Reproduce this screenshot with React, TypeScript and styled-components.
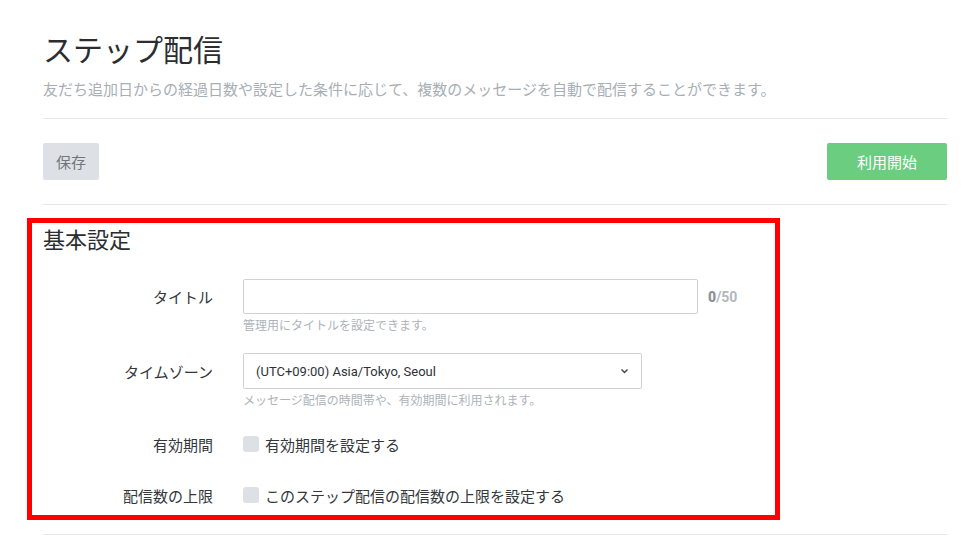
import React from "react";
import styled, { createGlobalStyle } from "styled-components";

const GlobalStyle = createGlobalStyle`
  html, body {
    margin: 0;
    padding: 0;
    background: #fff;
  }
  body {
    font-family: Roboto, "Noto Sans CJK JP", sans-serif;
    color: #2f3236;
  }
  * {
    box-sizing: border-box;
  }
`;

const Page = styled.div`
  width: 972px;
  padding: 33px 25px 0 43px;
`;

const Header = styled.header`
  padding-bottom: 18px;
  border-bottom: 1px solid #e6e7e9;
`;

const Title = styled.h1`
  margin: 0;
  font-size: 30px;
  line-height: 36px;
  font-weight: 400;
  color: #2b2d30;
`;

const Lead = styled.p`
  margin: 11px 0 0;
  font-size: 15px;
  line-height: 20px;
  color: #a7aeb5;
`;

const Toolbar = styled.div`
  display: flex;
  justify-content: space-between;
  align-items: center;
  padding: 24px 0;
  border-bottom: 1px solid #e6e7e9;
`;

const Button = styled.button<{ $primary?: boolean }>`
  height: 37px;
  padding: 0 ${(p) => (p.$primary ? "30px" : "13px")};
  min-width: ${(p) => (p.$primary ? "120px" : "56px")};
  border: none;
  border-radius: 2px;
  font-family: inherit;
  font-size: 15px;
  background: ${(p) => (p.$primary ? "#6bcd7f" : "#dde1e5")};
  color: ${(p) => (p.$primary ? "#ffffff" : "#70767c")};
`;

const Highlight = styled.section`
  width: 753px;
  margin: 13px 0 0 -16px;
  padding: 4px 11px 8px;
  border: 5px solid #ff0000;
`;

const SectionTitle = styled.h2`
  margin: 0 0 24px;
  font-size: 22px;
  line-height: 28px;
  font-weight: 400;
  color: #2b2d30;
`;

const Form = styled.div`
  display: flex;
  flex-direction: column;
`;

const Row = styled.div<{ $gap: number }>`
  display: grid;
  grid-template-columns: 170px 1fr;
  column-gap: 30px;
  margin-top: ${(p) => p.$gap}px;
`;

const Label = styled.div<{ $h: number }>`
  height: ${(p) => p.$h}px;
  display: flex;
  align-items: center;
  justify-content: flex-end;
  font-size: 15px;
  color: #34373b;
`;

const Field = styled.div`
  display: flex;
  flex-direction: column;
`;

const Inline = styled.div`
  display: flex;
  align-items: center;
`;

const TextInput = styled.input`
  width: 455px;
  height: 35px;
  border: 1px solid #cfd3d7;
  border-radius: 2px;
  padding: 0 12px;
  font-family: inherit;
  font-size: 13px;
  outline: none;
`;

const Counter = styled.span`
  margin-left: 10px;
  font-size: 14px;
  font-weight: 700;
  color: #b3b8bd;
  b {
    color: #8c9298;
  }
`;

const Help = styled.div`
  margin-top: 4px;
  font-size: 12px;
  line-height: 16px;
  color: #adb3b9;
`;

const Select = styled.div`
  width: 399px;
  height: 36px;
  border: 1px solid #cfd3d7;
  border-radius: 2px;
  padding: 0 12px;
  display: flex;
  align-items: center;
  justify-content: space-between;
  font-size: 13px;
  color: #2f3236;
`;

const CheckRow = styled.label`
  display: flex;
  align-items: center;
  gap: 6px;
  height: 24px;
  font-size: 15px;
  color: #34373b;
`;

const Box = styled.span`
  width: 16px;
  height: 16px;
  border-radius: 3px;
  background: #dde1e5;
`;

const Divider = styled.div`
  margin-top: 14px;
  border-top: 1px solid #e6e7e9;
`;

const Chevron = () => (
  <svg width="9" height="6" viewBox="0 0 9 6" fill="none">
    <path d="M1.5 1.5 L4.5 4.5 L7.5 1.5" stroke="#444" strokeWidth="1.4" />
  </svg>
);

export default function App() {
  return (
    <>
      <GlobalStyle />
      <Page>
        <Header>
          <Title>ステップ配信</Title>
          <Lead>
            友だち追加日からの経過日数や設定した条件に応じて、複数のメッセージを自動で配信することができます。
          </Lead>
        </Header>
        <Toolbar>
          <Button>保存</Button>
          <Button $primary>利用開始</Button>
        </Toolbar>
        <Highlight>
          <SectionTitle>基本設定</SectionTitle>
          <Form>
            <Row $gap={0}>
              <Label $h={35}>タイトル</Label>
              <Field>
                <Inline>
                  <TextInput type="text" />
                  <Counter>
                    <b>0</b>/50
                  </Counter>
                </Inline>
                <Help>管理用にタイトルを設定できます。</Help>
              </Field>
            </Row>
            <Row $gap={19}>
              <Label $h={36}>タイムゾーン</Label>
              <Field>
                <Select>
                  <span>(UTC+09:00) Asia/Tokyo, Seoul</span>
                  <Chevron />
                </Select>
                <Help>メッセージ配信の時間帯や、有効期間に利用されます。</Help>
              </Field>
            </Row>
            <Row $gap={23}>
              <Label $h={24}>有効期間</Label>
              <CheckRow>
                <Box />
                有効期間を設定する
              </CheckRow>
            </Row>
            <Row $gap={27}>
              <Label $h={24}>配信数の上限</Label>
              <CheckRow>
                <Box />
                このステップ配信の配信数の上限を設定する
              </CheckRow>
            </Row>
          </Form>
        </Highlight>
        <Divider />
      </Page>
    </>
  );
}
